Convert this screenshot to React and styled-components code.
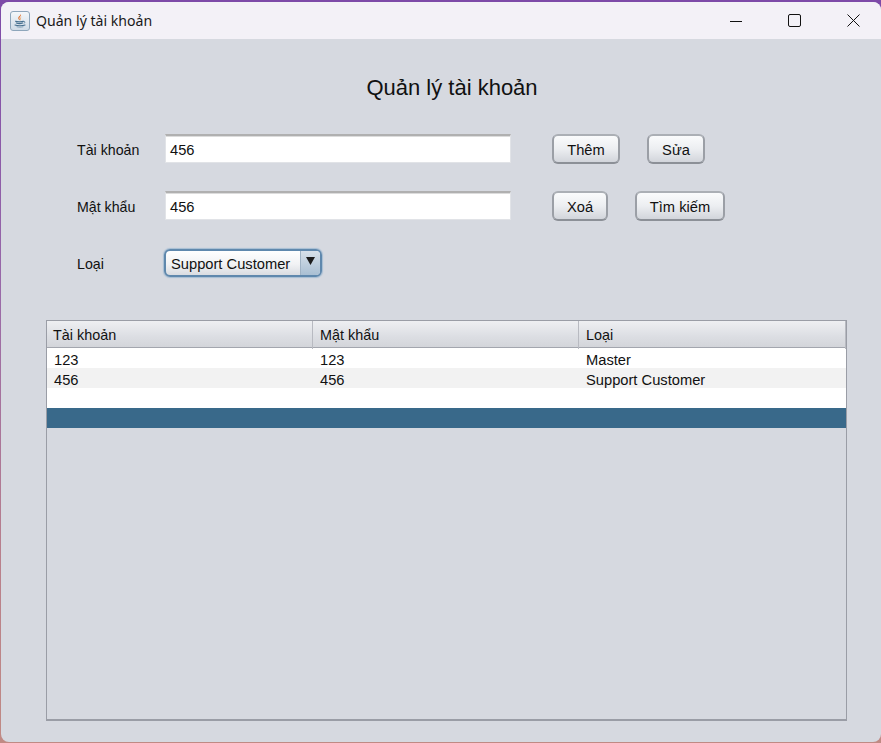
import React from "react";
import styled, { createGlobalStyle } from "styled-components";

const GlobalStyle = createGlobalStyle`
    html, body {
        margin: 0;
        padding: 0;
        width: 881px;
        height: 743px;
        overflow: hidden;
    }
    body {
        background: linear-gradient(180deg, #7d4aa8 0%, #9a6aa8 40%, #b9808c 75%, #c08a84 100%);
        font-family: "Liberation Sans", Arial, sans-serif;
    }
`;

const accounts = [
    { user: "123", pass: "123", type: "Master" },
    { user: "456", pass: "456", type: "Support Customer" },
    { user: "", pass: "", type: "" },
    { user: "", pass: "", type: "", selected: true },
];

function App() {
    return (
        <Desktop>
            <GlobalStyle />
            <Window>
                <TitleBar>
                    <JavaIcon />
                    <TitleText>Quản lý tài khoản</TitleText>
                    <WindowControls>
                        <ControlBtn>
                            <svg width="12" height="12" viewBox="0 0 12 12">
                                <path d="M0 6.5h12" stroke="#111" strokeWidth="1" />
                            </svg>
                        </ControlBtn>
                        <ControlBtn>
                            <svg width="13" height="13" viewBox="0 0 13 13" fill="none">
                                <rect x="0.5" y="0.5" width="12" height="12" rx="1.5" stroke="#111" />
                            </svg>
                        </ControlBtn>
                        <ControlBtn>
                            <svg width="13" height="13" viewBox="0 0 13 13">
                                <path d="M0.5 0.5l12 12M12.5 0.5l-12 12" stroke="#111" strokeWidth="1" />
                            </svg>
                        </ControlBtn>
                    </WindowControls>
                </TitleBar>
                <Content>
                    <Heading>Quản lý tài khoản</Heading>
                    <Form>
                        <FormRow>
                            <Label>Tài khoản</Label>
                            <TextField>456</TextField>
                            <Actions>
                                <Button $width={68}>Thêm</Button>
                                <Button $width={58}>Sửa</Button>
                            </Actions>
                        </FormRow>
                        <FormRow>
                            <Label>Mật khẩu</Label>
                            <TextField>456</TextField>
                            <Actions>
                                <Button $width={56}>Xoá</Button>
                                <Button $width={90}>Tìm kiếm</Button>
                            </Actions>
                        </FormRow>
                        <ComboRow>
                            <Label>Loại</Label>
                            <Combo>
                                <ComboValue>Support Customer</ComboValue>
                                <ComboArrow>
                                    <svg width="9" height="8" viewBox="0 0 9 8">
                                        <path d="M0 0h9L4.5 8z" fill="#1c1c1c" />
                                    </svg>
                                </ComboArrow>
                            </Combo>
                        </ComboRow>
                    </Form>
                    <TablePane>
                        <HeaderRow>
                            <HeaderCell>Tài khoản</HeaderCell>
                            <HeaderCell>Mật khẩu</HeaderCell>
                            <HeaderCell>Loại</HeaderCell>
                        </HeaderRow>
                        {accounts.map(function (a, i) {
                            return (
                                <Row key={i} $odd={i % 2 === 1} $selected={a.selected}>
                                    <Cell>{a.user}</Cell>
                                    <Cell>{a.pass}</Cell>
                                    <Cell>{a.type}</Cell>
                                </Row>
                            );
                        })}
                    </TablePane>
                </Content>
            </Window>
        </Desktop>
    );
}

function JavaIcon() {
    return (
        <IconFrame>
            <svg width="16" height="16" viewBox="0 0 16 16" fill="none">
                <path d="M8.8 1c1.2 2-2.2 3-1.2 5.2.3.7.9 1.2.9 1.2-1.7-.6-2.7-1.7-2.1-3.2.5-1.2 2.4-1.6 2.4-3.2z" fill="#e0702a" />
                <path d="M10.4 3.6c-1.4.7-2.1 1.4-1.6 2.6.2.4.4.8.4.8-1-.4-1.5-1.2-1.1-2 .4-.7 1.3-1 2.3-1.4z" fill="#ee9a52" />
                <path d="M3.5 8.3c1.5.7 6.6.7 8 0M4.3 10c1.3.5 5 .5 6.4 0M3 12c2 1 8 1 10 0" stroke="#46708f" strokeWidth="1.1" strokeLinecap="round" />
                <path d="M11.6 8.5c1.6-.4 2 1.2.2 1.7" stroke="#46708f" strokeWidth="0.8" />
                <path d="M5 13.8c1.8.5 4.2.5 6 0" stroke="#7d9cb4" strokeWidth="0.9" strokeLinecap="round" />
            </svg>
        </IconFrame>
    );
}

const Desktop = styled.div`
    width: 881px;
    height: 743px;
    padding: 2px 0 1px 1px;
    box-sizing: border-box;
`;
const Window = styled.div`
    width: 880px;
    height: 740px;
    border-radius: 8px;
    overflow: hidden;
    display: flex;
    flex-direction: column;
    background: #d6d9e0;
`;
const TitleBar = styled.div`
    height: 37px;
    flex-shrink: 0;
    display: flex;
    align-items: center;
    padding-left: 9px;
    background: #f3f1f7;
`;
const IconFrame = styled.div`
    width: 20px;
    height: 20px;
    box-sizing: border-box;
    border: 1px solid #8ea6bb;
    border-radius: 3px;
    background: linear-gradient(180deg, #f4f7fa, #cfdbe6);
    display: flex;
    align-items: center;
    justify-content: center;
`;
const TitleText = styled.span`
    margin-left: 6px;
    font-family: "Noto Sans", "Open Sans", sans-serif;
    font-size: 14.1px;
    color: #1a1a1a;
`;
const WindowControls = styled.div`
    margin-left: auto;
    margin-right: -2px;
    display: flex;
`;
const ControlBtn = styled.div`
    width: 59px;
    height: 37px;
    display: flex;
    align-items: center;
    justify-content: center;
`;
const Content = styled.div`
    flex: 1;
    display: flex;
    flex-direction: column;
    padding: 0 34px 21px 45px;
`;
const Heading = styled.h1`
    margin: 34px 0 0;
    height: 28px;
    line-height: 30px;
    text-align: center;
    font-size: 22px;
    font-weight: 400;
    color: #111;
    padding-left: 11px;
`;
const Form = styled.div`
    display: flex;
    flex-direction: column;
    gap: 27px;
    margin-top: 33px;
    padding-left: 31px;
`;
const FormRow = styled.div`
    display: flex;
    align-items: center;
    height: 30px;
`;
const ComboRow = styled(FormRow)`
    height: 28px;
    margin-top: 1px;
`;
const Label = styled.label`
    width: 88px;
    flex-shrink: 0;
    padding-top: 2px;
    font-size: 14.2px;
    color: #111;
`;
const TextField = styled.div`
    align-self: flex-start;
    width: 346px;
    height: 29px;
    box-sizing: border-box;
    padding-left: 4px;
    line-height: 28px;
    font-size: 14.7px;
    color: #111;
    background: #fff;
    border: 1px solid #e1e3e7;
    border-top: 2px solid #b0b0b0;
    box-shadow: inset 0 1px 0 #dcdcdc;
`;
const Actions = styled.div`
    margin-left: 41px;
    display: flex;
    gap: 27px;
`;
const Button = styled.button`
    width: ${(props) => props.$width}px;
    height: 30px;
    padding: 2px 0 0;
    font-family: inherit;
    font-size: 14.7px;
    color: #111;
    border: 2px solid #9b9fa6;
    border-top-color: #abafb5;
    border-bottom-color: #8c9097;
    border-radius: 6px;
    background: linear-gradient(180deg, #fafbfc 0%, #eceef1 50%, #d2d5db 100%);
`;
const Combo = styled.div`
    width: 158px;
    height: 28px;
    margin-left: -1px;
    box-sizing: border-box;
    display: flex;
    border: 2px solid #5f88ad;
    border-radius: 6px;
    overflow: hidden;
    background: linear-gradient(180deg, #ffffff 0%, #f1f2f4 55%, #d9dce1 100%);
    box-shadow: 0 0 1px 1px #a6bdd3;
`;
const ComboValue = styled.div`
    flex: 1;
    padding-left: 5px;
    line-height: 26px;
    font-size: 14.7px;
    color: #111;
`;
const ComboArrow = styled.div`
    width: 20px;
    display: flex;
    align-items: flex-start;
    justify-content: center;
    padding-top: 6px;
    box-sizing: border-box;
    border-left: 1px solid #9fb2c4;
    background: linear-gradient(180deg, #d7e0e9 0%, #a9bfd3 100%);
`;
const TablePane = styled.div`
    margin-top: 43px;
    flex: 1;
    border: 1px solid #9a9da6;
    border-bottom-width: 2px;
`;
const HeaderRow = styled.div`
    display: grid;
    grid-template-columns: 266px 266px 1fr;
    height: 26px;
    border-bottom: 1px solid #a3a6ae;
    background: linear-gradient(180deg, #eeeff2 0%, #dcdee3 60%, #d3d5da 100%);
`;
const HeaderCell = styled.div`
    padding-left: 6px;
    line-height: 28px;
    font-size: 14.4px;
    color: #111;
    border-right: 1px solid #b8bac1;
    & + & {
        padding-left: 7px;
    }
`;
const Row = styled.div`
    display: grid;
    grid-template-columns: 266px 266px 1fr;
    height: 20px;
    background: ${(props) => (props.$selected ? "#39698a" : props.$odd ? "#f2f2f2" : "#fff")};
`;
const Cell = styled.div`
    padding-left: 7px;
    line-height: 24px;
    font-size: 14.7px;
    color: #111;
`;

export default App;
